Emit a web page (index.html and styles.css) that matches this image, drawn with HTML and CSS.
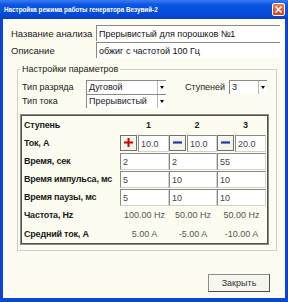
FILE: index.html
```html
<!DOCTYPE html>
<html lang="ru">
<head>
    <meta charset="UTF-8">
    <title>Настройка режима работы генератора Везувий-2</title>
    <link rel="stylesheet" href="styles.css">
</head>
<body>
    <div class="window">
        <div class="titlebar">
            <span class="title">Настройка режима работы генератора Везувий-2</span>
            <span class="close">
                <svg width="11" height="11" viewBox="0 0 11 11"><path d="M2.5 2.5 L8.5 8.5 M8.5 2.5 L2.5 8.5" stroke="#fff" stroke-width="1.7"/></svg>
            </span>
        </div>

        <div class="client">
            <div class="field">
                <span class="label">Название анализа</span>
                <span class="edit">Прерывистый для порошков №1</span>
            </div>
            <div class="field">
                <span class="label">Описание</span>
                <span class="edit">обжиг с частотой 100 Гц</span>
            </div>

            <fieldset class="group">
                <legend>Настройки параметров</legend>

                <div class="params">
                    <span>Тип разряда</span>
                    <span class="combo">Дуговой<i class="arrow"></i></span>
                    <span class="steps-label">Ступеней</span>
                    <span class="combo">3<i class="arrow"></i></span>
                    <span>Тип тока</span>
                    <span class="combo">Прерывистый<i class="arrow"></i></span>
                </div>

                <div class="stages">
                    <span class="name">Ступень</span>
                    <span class="num">1</span>
                    <span class="num">2</span>
                    <span class="num">3</span>

                    <span class="name">Ток, А</span>
                    <span class="cell">
                        <span class="sign"><svg width="11" height="11" viewBox="0 0 11 11"><path d="M5.5 1 V10 M1 5.5 H10" stroke="#c80000" stroke-width="2"/></svg></span>
                        <span class="box">10.0</span>
                    </span>
                    <span class="cell">
                        <span class="sign"><svg width="11" height="11" viewBox="0 0 11 11"><path d="M1 5.5 H10" stroke="#1c3aa8" stroke-width="2.2"/></svg></span>
                        <span class="box">10.0</span>
                    </span>
                    <span class="cell">
                        <span class="sign"><svg width="11" height="11" viewBox="0 0 11 11"><path d="M1 5.5 H10" stroke="#1c3aa8" stroke-width="2.2"/></svg></span>
                        <span class="box">20.0</span>
                    </span>

                    <span class="name">Время, сек</span>
                    <span class="box">2</span>
                    <span class="box">2</span>
                    <span class="box">55</span>

                    <span class="name">Время импульса, мс</span>
                    <span class="box">5</span>
                    <span class="box">10</span>
                    <span class="box">10</span>

                    <span class="name">Время паузы, мс</span>
                    <span class="box">5</span>
                    <span class="box">10</span>
                    <span class="box">10</span>

                    <span class="name">Частота, Hz</span>
                    <span class="value">100.00 Hz</span>
                    <span class="value">50.00 Hz</span>
                    <span class="value">50.00 Hz</span>

                    <span class="name">Средний ток, А</span>
                    <span class="value">5.00 A</span>
                    <span class="value">-5.00 A</span>
                    <span class="value">-10.00 A</span>
                </div>
            </fieldset>

            <div class="actions">
                <button class="btn">Закрыть</button>
            </div>
        </div>
    </div>
</body>
</html>
```

FILE: styles.css
```css
body {
    margin: 0;
    font-family: "Liberation Sans", Arial, sans-serif;
    font-size: 9px;
    color: #222;
    white-space: nowrap;
}
.window {
    width: 288px;
    height: 302px;
    box-sizing: border-box;
    background: #0a45d6;
    display: flex;
    flex-direction: column;
}
.titlebar {
    height: 19px;
    flex-shrink: 0;
    display: flex;
    align-items: center;
    justify-content: space-between;
    padding: 0 3px 0 4px;
    background: linear-gradient(#3b7cf2, #0a55e4 25%, #0349d4 80%, #0a40c0);
    color: white;
}
.title {
    font-size: 6.3px;
    font-weight: bold;
}
.close {
    width: 13px;
    height: 13px;
    box-sizing: border-box;
    border: 1px solid #fff;
    border-radius: 2px;
    background: linear-gradient(#ee7c58, #d24420);
    display: flex;
    align-items: center;
    justify-content: center;
}
.client {
    flex: 1;
    margin: 0 3px 4px 3px;
    background: #fcfcf0;
    padding: 6px 5px 0 8px;
    display: flex;
    flex-direction: column;
}
.field {
    display: flex;
    height: 16px;
    margin-bottom: 1px;
    align-items: center;
}
.label {
    width: 85px;
    font-size: 9.5px;
}
.edit {
    width: 184px;
    height: 16px;
    box-sizing: border-box;
    border-top: 1px solid #8a8a84;
    border-left: 1px solid #8a8a84;
    background: #fff;
    padding: 1px 0 0 2px;
    line-height: 14px;
    color: #111;
}
.group {
    margin: 4px 3px 0 6px;
    padding: 0 0 5px 2px;
    border: 1px solid #d0d0c4;
}
.group legend {
    padding: 0 2px;
    line-height: 12px;
}
.params {
    display: grid;
    grid-template-columns: 64px 80px 19px 44px 38px;
    grid-auto-rows: 14px;
    align-items: center;
    padding: 5px 0 0 2px;
}
.steps-label {
    grid-column: 4;
}
.params > span:nth-child(5) {
    grid-column: 1;
}
.combo {
    height: 14px;
    box-sizing: border-box;
    border-top: 1px solid #8a8a84;
    border-left: 1px solid #8a8a84;
    background: #fff;
    padding-left: 2px;
    line-height: 13px;
    display: flex;
    justify-content: space-between;
}
.arrow {
    width: 8px;
    border-left: 1px solid #b8b8b0;
    position: relative;
}
.arrow::after {
    content: "";
    position: absolute;
    left: 2px;
    top: 5px;
    border: 2px solid transparent;
    border-top: 3px solid #000;
}
.stages {
    width: 249px;
    margin-top: 6px;
    box-sizing: border-box;
    border: 1px solid #8c8c84;
    box-shadow: inset 1px 1px 0 #505050, inset -1px -1px 0 #505050;
    padding: 1px 0 1px 3px;
    display: grid;
    grid-template-columns: 96px 49px 48px 49px;
    grid-template-rows: 18px repeat(5, 18px) 19px;
    align-items: center;
}
.name {
    font-weight: bold;
    color: #1a1a1a;
    letter-spacing: -0.2px;
}
.num {
    font-weight: bold;
    text-align: center;
    padding-left: 8px;
}
.cell {
    display: flex;
    height: 17px;
}
.sign {
    width: 17px;
    height: 16px;
    box-sizing: border-box;
    flex-shrink: 0;
    border: 1px solid #707070;
    box-shadow: inset 1px 1px 0 #fff;
    background: #f4f4ea;
    display: flex;
    align-items: center;
    justify-content: center;
    margin-right: 1px;
}
.box {
    height: 17px;
    flex: 1;
    box-sizing: border-box;
    border: 1px solid #d4d4cc;
    border-top-color: #8a8a84;
    border-left-color: #8a8a84;
    background: #fff;
    padding: 1px 0 0 2px;
    line-height: 14px;
    color: #444;
}
.value {
    text-align: center;
    color: #555;
}
.actions {
    display: flex;
    justify-content: flex-end;
    padding: 23px 10px 0 0;
}
.btn {
    width: 62px;
    height: 18px;
    font-family: inherit;
    font-size: 9px;
    color: #333;
    background: #f6f6ee;
    border: 1px solid #8e8e88;
    border-right-color: #505050;
    border-bottom-color: #505050;
    padding: 0;
}
```
